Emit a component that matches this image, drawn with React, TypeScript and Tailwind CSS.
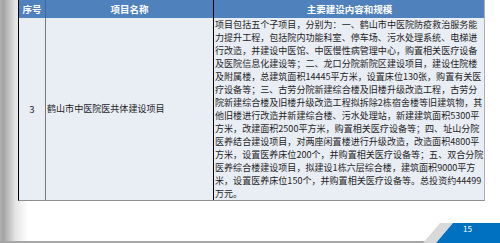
import React from "react";

const lines = [
  "项目包括五个子项目，分别为：一、鹤山市中医院防疫救治服务能",
  "力提升工程，包括院内功能科室、停车场、污水处理系统、电梯进",
  "行改造，并建设中医馆、中医慢性病管理中心，购置相关医疗设备",
  "及医院信息化建设等；二、龙口分院新院区建设项目，建设住院楼",
  "及附属楼，总建筑面积14445平方米，设置床位130张，购置有关医",
  "疗设备等；三、古劳分院新建综合楼及旧楼升级改造工程，古劳分",
  "院新建综合楼及旧楼升级改造工程拟拆除2栋宿舍楼等旧建筑物，其",
  "他旧楼进行改造并新建综合楼、污水处理站，新建建筑面积5300平",
  "方米，改建面积2500平方米，购置相关医疗设备等；四、址山分院",
  "医养结合建设项目，对两座闲置楼进行升级改造，改造面积4800平",
  "方米，设置医养床位200个，并购置相关医疗设备等；五、双合分院",
  "医养综合楼建设项目，拟建设1栋六层综合楼，建筑面积9000平方",
  "米，设置医养床位150个，并购置相关医疗设备等。总投资约44499",
  "万元。",
];

export default function App() {
  return (
    <div
      className="w-[500px] h-[243px] overflow-hidden flex flex-col bg-[linear-gradient(to_right,#b4b4b4_0px,#a2a2a2_3px,#e6e6e6_16px,#ffffff_28px)]"
      style={{ fontFamily: '"Noto Sans CJK SC", "Noto Sans", sans-serif' }}
    >
      {/* table */}
      <div className="ml-[18px] w-[467px] border-l border-l-black border-r border-r-[#b0b0b0] border-b border-b-[#8f8f8f] bg-[#e9edf4]">
        {/* header */}
        <div className="grid grid-cols-[27px_168px_271px] h-[18px] bg-[#4f81bd] text-white font-bold text-[9.5px] leading-[18px]">
          <div className="text-center border-r border-r-[#3b679b]">序号</div>
          <div className="text-center border-r border-r-black">项目名称</div>
          <div className="text-center">主要建设内容和规模</div>
        </div>
        {/* body */}
        <div className="grid grid-cols-[27px_168px_271px] h-[182px] text-[9.05px] text-[#1e1e1e]">
          <div className="flex items-center justify-center border-r border-r-[#7a7a7a] text-[9.5px]">3</div>
          <div className="flex items-center pl-px border-r border-r-black">鹤山市中医院医共体建设项目</div>
          <div className="flex flex-col leading-[13px] pl-px">
            {lines.map((l, i) => (
              <div key={i} className="whitespace-nowrap h-[13px]">
                {l}
              </div>
            ))}
          </div>
        </div>
      </div>
      {/* footer */}
      <div className="flex-1 flex items-end">
        <div className="flex-1 h-[2px] bg-[#a6a6a6]" />
        <div className="relative w-[77px] h-[20px] shrink-0">
          <svg width="77" height="20" viewBox="0 0 77 20" className="block">
            <polygon points="0,18 0,20 13,20 13,18" fill="#a6a6a6" />
            <polygon points="17,0 30,0 13,20 0,20" fill="#d9d9d9" />
            <polygon points="30,0 77,0 77,20 13,20" fill="#0070c0" />
          </svg>
          <span className="absolute left-[40px] top-[1px] text-[8px] leading-[10px] text-white">15</span>
        </div>
      </div>
    </div>
  );
}
